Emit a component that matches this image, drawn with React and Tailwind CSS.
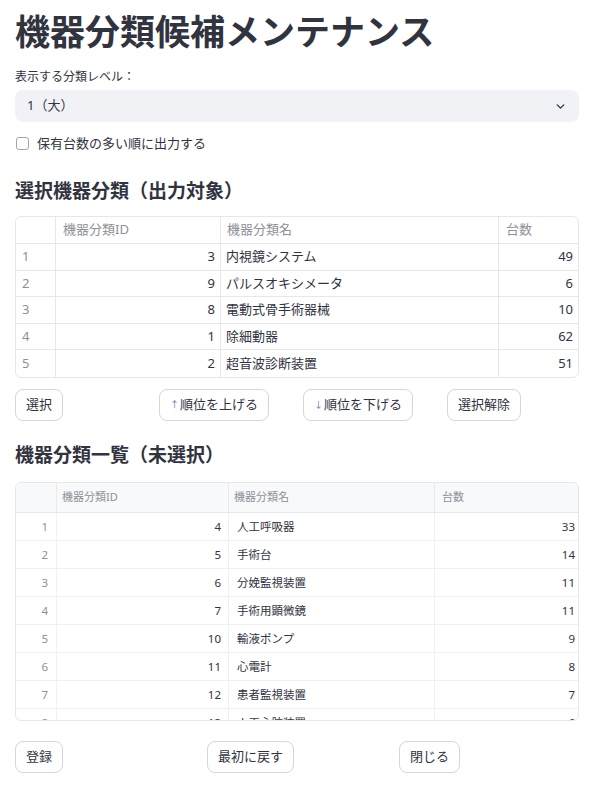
import { ChevronDown } from 'lucide-react';

const selected = [
  { id: 3, name: '内視鏡システム', count: 49 },
  { id: 9, name: 'パルスオキシメータ', count: 6 },
  { id: 8, name: '電動式骨手術器械', count: 10 },
  { id: 1, name: '除細動器', count: 62 },
  { id: 2, name: '超音波診断装置', count: 51 },
];

const unselected = [
  { id: 4, name: '人工呼吸器', count: 33 },
  { id: 5, name: '手術台', count: 14 },
  { id: 6, name: '分娩監視装置', count: 11 },
  { id: 7, name: '手術用顕微鏡', count: 11 },
  { id: 10, name: '輸液ポンプ', count: 9 },
  { id: 11, name: '心電計', count: 8 },
  { id: 12, name: '患者監視装置', count: 7 },
  { id: 13, name: '人工心肺装置', count: 6 },
];

function Button({ children }) {
  return (
    <button className="h-8 px-[10px] rounded-lg border border-[#d6d6d9] bg-white text-[13px] text-[#31333f] inline-flex items-center">
      {children}
    </button>
  );
}

export default function App() {
  return (
    <div
      className="w-[602px] h-[791px] bg-white text-[#31333f] pl-[15px] pr-[23px] overflow-hidden"
      style={{ fontFamily: '"Noto Sans", "Noto Sans CJK JP", sans-serif' }}
    >
      {/* Title */}
      <h1 className="pt-[7px] text-[35px] font-bold leading-[50px]">機器分類候補メンテナンス</h1>

      {/* Level select */}
      <div className="mt-[12px] text-[12px] leading-[16px]">表示する分類レベル：</div>
      <div className="mt-[5px] h-8 rounded-lg bg-[#f0f2f6] flex items-center justify-between px-3 text-[13px]">
        <span>1（大）</span>
        <ChevronDown size={13} strokeWidth={2.5} />
      </div>

      {/* Checkbox */}
      <label className="mt-[13px] flex items-center gap-[8px] text-[13px] leading-[16px]">
        <span className="w-[13px] h-[13px] rounded-[3px] border border-[#a3a4aa] bg-white ml-[1px]" />
        <span>保有台数の多い順に出力する</span>
      </label>

      {/* Selected */}
      <h2 className="mt-[27px] text-[19px] font-bold leading-[26px]">選択機器分類（出力対象）</h2>
      <div className="mt-[12px] border border-[#e6e7ea] rounded-md overflow-hidden">
        <div className="grid grid-cols-[40px_165px_278px_1fr] h-[27px] text-[13px] text-[#8e9097] border-b border-[#e6e7ea]">
          <div className="border-r border-[#e6e7ea]" />
          <div className="border-r border-[#e6e7ea] px-[7px] flex items-center">機器分類ID</div>
          <div className="border-r border-[#e6e7ea] px-[6px] flex items-center">機器分類名</div>
          <div className="px-[7px] flex items-center">台数</div>
        </div>
        {selected.map((r, i) => (
          <div
            key={r.id}
            className={`grid grid-cols-[40px_165px_278px_1fr] h-[26.6px] text-[13px] ${i < selected.length - 1 ? 'border-b border-[#e6e7ea]' : ''}`}
          >
            <div className="border-r border-[#e6e7ea] px-[6px] flex items-center text-[#8e9097]">{i + 1}</div>
            <div className="border-r border-[#e6e7ea] px-[5px] flex items-center justify-end">{r.id}</div>
            <div className="border-r border-[#e6e7ea] px-[5px] flex items-center">{r.name}</div>
            <div className="px-[5px] flex items-center justify-end">{r.count}</div>
          </div>
        ))}
      </div>

      {/* Buttons */}
      <div className="mt-[11px] grid grid-cols-[128px_128px_128px_128px] gap-4">
        <div><Button>選択</Button></div>
        <div>
          <Button>
            <span className="text-[9px] text-[#5b7fa8] mr-[1px]">↑</span>順位を上げる
          </Button>
        </div>
        <div>
          <Button>
            <span className="text-[9px] text-[#5b7fa8] mr-[1px]">↓</span>順位を下げる
          </Button>
        </div>
        <div><Button>選択解除</Button></div>
      </div>

      {/* Unselected */}
      <h2 className="mt-[21px] text-[19px] font-bold leading-[26px]">機器分類一覧（未選択）</h2>
      <div className="mt-[14px] h-[239px] border border-[#e6e7ea] rounded-md overflow-hidden">
        <div className="grid grid-cols-[41px_172px_206px_1fr] h-[30px] bg-[#f8f9fb] text-[11px] text-[#8e9097] border-b border-[#e6e7ea]">
          <div className="border-r border-[#e9eaed]" />
          <div className="border-r border-[#e9eaed] px-[5px] flex items-center">機器分類ID</div>
          <div className="border-r border-[#e9eaed] px-[5px] flex items-center">機器分類名</div>
          <div className="px-[7px] flex items-center">台数</div>
        </div>
        {unselected.map((r, i) => (
          <div key={r.id} className="grid grid-cols-[41px_172px_206px_1fr] h-[28px] text-[11.5px] border-b border-[#eff0f2]">
            <div className="border-r border-[#eff0f2] pr-[8px] flex items-center justify-end text-[#8e9097]">{i + 1}</div>
            <div className="border-r border-[#eff0f2] pr-[7px] flex items-center justify-end">{r.id}</div>
            <div className="border-r border-[#eff0f2] px-[8px] flex items-center">{r.name}</div>
            <div className="pr-[3px] flex items-center justify-end">{r.count}</div>
          </div>
        ))}
      </div>

      {/* Bottom buttons */}
      <div className="mt-[20px] grid grid-cols-[176px_176px_176px] gap-4">
        <div><Button>登録</Button></div>
        <div><Button>最初に戻す</Button></div>
        <div><Button>閉じる</Button></div>
      </div>
    </div>
  );
}
